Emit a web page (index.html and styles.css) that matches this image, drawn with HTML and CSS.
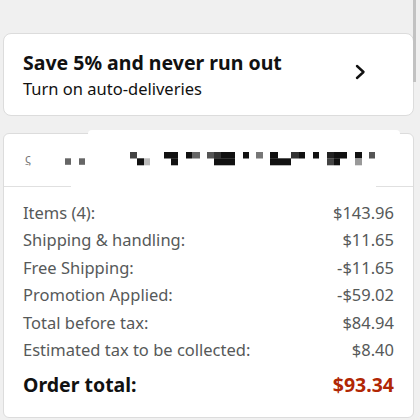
FILE: index.html
```html
<!DOCTYPE html>
<html lang="en">
<head>
<meta charset="utf-8">
<title>Order summary</title>
<link rel="stylesheet" href="styles.css">
</head>
<body>
<div class="page">
  <a class="card promo" href="#">
    <div class="promo-text">
      <div class="promo-title">Save 5% and never run out</div>
      <div class="promo-sub">Turn on auto-deliveries</div>
    </div>
    <svg class="chevron" width="12" height="16" viewBox="0 0 12 16" aria-hidden="true">
      <path d="M3 2 L9.5 8 L3 14" fill="none" stroke="#111" stroke-width="2.4" stroke-linecap="round" stroke-linejoin="round"/>
    </svg>
  </a>

  <section class="card summary">
    <div class="smear"></div>
    <div class="summary-head">
      <svg class="redacted" width="360" height="18" viewBox="0 0 360 18" aria-hidden="true">
        <text x="0" y="13" font-family="Noto Sans, sans-serif" font-size="12" fill="#777">ς</text>
        <rect x="0.5" y="14" width="3" height="1" fill="#999"/>
        <rect x="40" y="8.3" width="6" height="6.5" fill="#666"/>
        <rect x="54" y="8.3" width="6" height="6.5" fill="#666"/>
        <rect x="105" y="2" width="7" height="6.5" fill="#444"/>
        <rect x="112" y="8.3" width="7" height="7" fill="#111"/>
        <rect x="119" y="8.3" width="6" height="7" fill="#bbb"/>
        <rect x="139" y="2" width="14" height="6.5" fill="#111"/>
        <rect x="146" y="8.3" width="7" height="7" fill="#111"/>
        <rect x="161" y="2" width="6" height="6.5" fill="#111"/>
        <rect x="167" y="2" width="8" height="6.5" fill="#666"/>
        <rect x="182" y="2" width="7" height="6.5" fill="#555"/>
        <rect x="189" y="2" width="7" height="6.5" fill="#333"/>
        <rect x="196" y="2" width="14" height="6.5" fill="#111"/>
        <rect x="189" y="8.3" width="21" height="7" fill="#111"/>
        <rect x="218" y="2" width="6" height="6.5" fill="#111"/>
        <rect x="231" y="2" width="7" height="6.5" fill="#777"/>
        <rect x="245" y="2" width="8" height="6.5" fill="#111"/>
        <rect x="245" y="8.3" width="21" height="7" fill="#111"/>
        <rect x="266" y="2" width="8" height="6.5" fill="#333"/>
        <rect x="274" y="2" width="6" height="6.5" fill="#111"/>
        <rect x="288" y="2" width="6" height="6.5" fill="#111"/>
        <rect x="302" y="2" width="7" height="6.5" fill="#222"/>
        <rect x="309" y="2" width="13" height="6.5" fill="#111"/>
        <rect x="302" y="8.3" width="7" height="7" fill="#444"/>
        <rect x="309" y="8.3" width="6" height="7" fill="#111"/>
        <rect x="330" y="2" width="7" height="6.5" fill="#111"/>
        <rect x="330" y="8.3" width="7" height="7" fill="#999"/>
        <rect x="344" y="2" width="6" height="6.5" fill="#555"/>
      </svg>
    </div>
    <div class="divider"></div>
    <div class="rows">
      <div class="row"><span>Items (4):</span><span>$143.96</span></div>
      <div class="row"><span>Shipping &amp; handling:</span><span>$11.65</span></div>
      <div class="row"><span>Free Shipping:</span><span>-$11.65</span></div>
      <div class="row"><span>Promotion Applied:</span><span>-$59.02</span></div>
      <div class="row"><span>Total before tax:</span><span>$84.94</span></div>
      <div class="row"><span>Estimated tax to be collected:</span><span>$8.40</span></div>
      <div class="row total"><span>Order total:</span><span class="total-value">$93.34</span></div>
    </div>
  </section>
</div>
<div class="scrollbar"></div>
</body>
</html>
```

FILE: styles.css
```css
* { box-sizing: border-box; }

html, body {
  margin: 0;
  padding: 0;
  background: #f0f0f0;
  font-family: "Noto Sans", "Liberation Sans", sans-serif;
  overflow: hidden;
}

.page {
  width: 420px;
  height: 420px;
  padding: 33px 6px 0 3px;
  display: flex;
  flex-direction: column;
  gap: 17px;
}

.card {
  background: #fff;
  border: 1px solid #dcdcdc;
  border-radius: 8px;
}

.promo {
  display: flex;
  align-items: center;
  justify-content: space-between;
  height: 83px;
  padding: 0 47px 0 19px;
  text-decoration: none;
  color: #111;
}

.promo-text {
  display: flex;
  flex-direction: column;
  gap: 3px;
}

.promo-title {
  font-size: 19.5px;
  font-weight: 700;
  line-height: 25px;
  color: #111;
}

.promo-sub {
  font-size: 16.5px;
  line-height: 21px;
  color: #111;
}

.chevron {
  margin-top: -6px;
}

.summary {
  position: relative;
  flex: 1;
  border-radius: 6px;
  margin-bottom: 2px;
}

.smear {
  position: absolute;
  top: -4px;
  left: 84px;
  width: 312px;
  height: 8px;
  background: #fff;
  border-radius: 4px;
}

.summary-head {
  height: 52px;
  padding: 16px 0 0 21px;
}

.redacted {
  display: block;
}

.divider {
  height: 1px;
  background: linear-gradient(to right, #e0e0e0 0, #e0e0e0 67px, transparent 67px, transparent 372px, #e0e0e0 372px);
}

.rows {
  padding: 12px 19px 0 19px;
  display: flex;
  flex-direction: column;
}

.row {
  display: flex;
  justify-content: space-between;
  font-size: 16.5px;
  line-height: 27.4px;
  color: #565959;
}

.row.total {
  margin-top: 8px;
  font-size: 19.5px;
  font-weight: 700;
  color: #111;
}

.total-value {
  color: #b12704;
}

.scrollbar {
  position: absolute;
  top: 0;
  left: 413px;
  width: 3px;
  height: 82px;
  background: #c2c2c2;
}
```
